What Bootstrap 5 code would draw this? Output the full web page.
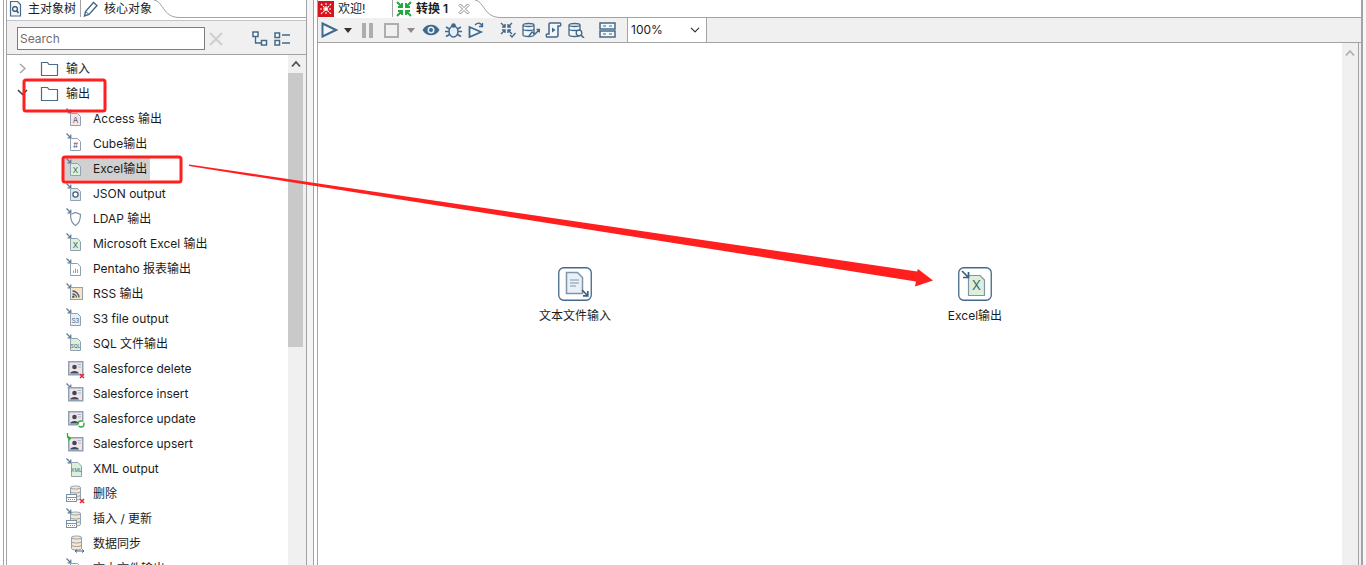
<!DOCTYPE html>
<html lang="zh-CN">
<head>
    <meta charset="UTF-8">
    <meta name="viewport" content="width=device-width, initial-scale=1.0">
    <title>转换 1</title>
    <link href="https://cdn.jsdelivr.net/npm/bootstrap@5.3.0/dist/css/bootstrap.min.css" rel="stylesheet">
    <script src="https://cdn.jsdelivr.net/npm/bootstrap@5.3.0/dist/js/bootstrap.bundle.min.js"></script>
    <style>
        html, body {
            height: 100%;
            overflow: hidden;
        }
        body {
            font-family: "Inter", "Noto Sans CJK SC", sans-serif;
            font-size: 12px;
            line-height: 16px;
            color: #1c1c1c;
            background: #fff;
        }
        svg {
            display: block;
            flex-shrink: 0;
        }
        .app {
            position: relative;
            width: 1366px;
            height: 565px;
            overflow: hidden;
        }
        /* eclipse style double frame round each view */
        .pane-left {
            width: 304px;
            margin-left: 3px;
            padding-left: 2px;
            border-left: 1px solid #a3a3a3;
            border-right: 1px solid #a3a3a3;
        }
        .pane-left-in {
            border-left: 1px solid #a3a3a3;
        }
        .sash {
            width: 6px;
            background: #f4f4f4;
        }
        .pane-right {
            width: 1050px;
            padding-left: 3px;
            border-left: 1px solid #a3a3a3;
            border-right: 2px solid #a3a3a3;
        }
        .pane-right-in {
            border-left: 1px solid #a3a3a3;
        }
        .page-edge {
            background: #f7f7f7;
        }
        .tab-strip {
            height: 18px;
        }
        .view-tab {
            height: 17px;
            gap: 4px;
            white-space: nowrap;
        }
        .tab-filler {
            height: 18px;
            border-bottom: 1px solid #a3a3a3;
        }
        .tab-tree {
            width: 74px;
            padding-left: 1px;
            gap: 5px;
            border-right: 1px solid #a3a3a3;
        }
        .tab-core {
            width: 73px;
            padding-left: 2px;
            gap: 5px;
        }
        .tab-hello {
            width: 75px;
            border-right: 1px solid #a3a3a3;
        }
        .tab-trans {
            width: 82px;
            padding-left: 3px;
        }
        .tab-trans b {
            font-weight: 600;
            width: 38px;
        }
        .search-gap {
            height: 3px;
            border-bottom: 1px solid #c4c4c4;
        }
        .search-row {
            height: 34px;
            padding-left: 10px;
            padding-top: 2px;
            background: #f0f0f0;
            border-bottom: 1px solid #a3a3a3;
        }
        .search-box.form-control {
            width: 188px;
            height: 23px;
            min-height: 0;
            padding: 0 2px;
            font-size: 12px;
            line-height: 16px;
            border: 1px solid #7d7d7d;
            border-radius: 0;
            font-family: inherit;
        }
        .search-box.form-control::placeholder {
            color: #6f6f6f;
            opacity: 1;
        }
        .tree-toggle {
            margin-left: 29px;
        }
        .list-toggle {
            margin-left: 6px;
        }
        .tree-body {
            height: 511px;
            overflow: hidden;
        }
        .tree-list {
            width: 281px;
            padding-top: 1px;
        }
        .tree-row {
            height: 25px;
            white-space: nowrap;
        }
        .tree-row.top-level {
            padding-left: 9px;
        }
        .tree-row.top-level .folder-ico {
            margin-left: 9px;
        }
        .tree-row.top-level .label-text {
            margin-left: 6px;
        }
        .tree-row.step {
            padding-left: 58px;
        }
        .tree-row.step .label-text {
            margin-left: 8px;
        }
        .row-picked {
            width: 87px;
            height: 22px;
            margin-left: -2px;
            padding-left: 2px;
            background: #d0d0d0;
        }
        .v-scroll {
            width: 18px;
            background: #f0f0f0;
        }
        .v-scroll-up {
            width: 15px;
            height: 18px;
        }
        .v-scroll-thumb {
            width: 15px;
            height: 274px;
            background: #c9c9c9;
        }
        .tool-bar {
            height: 25px;
            background: #f0f0f0;
            border-bottom: 1px solid #a3a3a3;
        }
        .tb-btn {
            width: 23px;
            height: 24px;
        }
        .tb-drop {
            width: 14px;
            height: 24px;
        }
        .tb-sep {
            width: 8px;
        }
        .tb-nudge {
            margin-left: 1px;
        }
        .zoom-pick.form-select {
            width: 80px;
            height: 24px;
            padding: 0 0 0 3px;
            font-size: 12px;
            line-height: 16px;
            font-family: inherit;
            color: #1c1c1c;
            border: 0;
            border-left: 1px solid #a3a3a3;
            border-right: 1px solid #a3a3a3;
            border-radius: 0;
            background-position: right 5px center;
            background-size: 12px 10px;
        }
        .canvas-wrap {
            height: 522px;
            padding-right: 2px;
            background: #f0f0f0;
        }
        .canvas-area {
            position: relative;
            overflow: hidden;
            background: #fff;
        }
        .flow-node {
            position: absolute;
            top: 224px;
            width: 100px;
        }
        .node-input {
            left: 207px;
        }
        .node-excel {
            left: 607px;
        }
        .node-name {
            margin-top: 7px;
            text-align: center;
            white-space: nowrap;
        }
        .v-scroll-right {
            width: 17px;
            background: #f0f0f0;
            border-right: 1px solid #a3a3a3;
        }
        .v-scroll-right .up-arrow {
            height: 20px;
        }
        .mark-up {
            position: absolute;
            left: 0;
            top: 0;
            pointer-events: none;
        }
    </style>
</head>
<body>
<svg width="0" height="0" class="position-absolute">
    <defs>
        <symbol id="arr" viewBox="0 0 20 21">
            <path d="M1.5 .5 5.5 4.5M5.8 1.6V4.8H2.6" fill="none" stroke="#5d7b95" stroke-width="1.2"/>
        </symbol>
        <symbol id="doc" viewBox="0 0 20 21">
            <path d="M5.5 5.5H12.5L15.5 8.5V17.5H5.5Z" fill="currentColor" stroke="#8ea2b4"/>
        </symbol>
        <symbol id="folder" viewBox="0 0 20 21">
            <path d="M1.5 4.5H7.5L9 6.5H17.5V17.5H1.5Z" fill="#fff" stroke="#4c6c88" stroke-width="1.2"/>
        </symbol>
        <symbol id="card" viewBox="0 0 20 21">
            <rect x="3.75" y="3.75" width="14" height="13" fill="#f2e4e8" stroke="#8ea2b4" stroke-width="1.5"/>
            <circle cx="9.500" cy="9" r="2.300" fill="#3e4a57"/>
            <path d="M5 15.500C5.500 12 13.500 12 14 15.500Z" fill="#3e4a57"/>
            <path d="M12.500 6.500H16M13 9H16" stroke="#aab6c2"/>
        </symbol>
        <symbol id="db" viewBox="0 0 20 21">
            <path d="M5.500 4.500C5.500 2.500 15.500 2.500 15.500 4.500V15.500C15.500 17.500 5.500 17.500 5.500 15.500Z" fill="#fbe6c8" stroke="#8ea2b4"/>
            <path d="M5.500 4.500C5.500 6.500 15.500 6.500 15.500 4.500M5.500 8.500C5.500 10.500 15.500 10.500 15.500 8.500M5.500 12C5.500 14 15.500 14 15.500 12" fill="none" stroke="#8ea2b4"/>
        </symbol>
        <symbol id="dbtable" viewBox="0 0 20 21">
            <use href="#db"/>
            <rect x="1.500" y="11.500" width="10" height="7" fill="#fff" stroke="#7d91a3"/>
            <path d="M1.500 14.500H11.500" stroke="#7d91a3"/>
            <path d="M3 16.500H10" stroke="#7d91a3" stroke-dasharray="1 1"/>
        </symbol>
        <symbol id="redx" viewBox="0 0 20 21">
            <path d="M15 16 19 20M19 16 15 20" stroke="#e5263b" stroke-width="1.6"/>
        </symbol>
    </defs>
</svg>

<div class="app d-flex">
    <!-- left side: design tree -->
    <div class="pane-left">
        <div class="pane-left-in">
            <div class="tab-strip d-flex">
                <div class="view-tab tab-tree d-flex align-items-center">
                    <svg width="15" height="16" viewBox="0 0 15 16"><path d="M2.500 .5H9.500L12.500 3.500V15H2.500Z" fill="#f3f6f9" stroke="#44688a" stroke-width="1.200"/><circle cx="7" cy="8" r="2.400" fill="none" stroke="#2d4a66" stroke-width="1.200"/><path d="M8.800 10 10.500 12" stroke="#2d4a66" stroke-width="1.300"/></svg>
                    <span>主对象树</span>
                </div>
                <div class="view-tab tab-core d-flex align-items-center">
                    <svg width="16" height="16" viewBox="0 0 16 16"><path d="M1.500 15 2.500 10.500 10.500 1.500 14 4.500 6 13.500Z" fill="#fff" stroke="#44688a" stroke-width="1.400"/><path d="M2.500 10.500 6 13.500" stroke="#44688a"/></svg>
                    <span>核心对象</span>
                </div>
                <svg width="24" height="18" viewBox="0 0 24 18"><path d="M0 0C9 1 9 17 24 17.500" fill="none" stroke="#a3a3a3"/></svg>
                <div class="tab-filler flex-grow-1"></div>
            </div>
            <div class="search-gap"></div>
            <div class="search-row d-flex align-items-center">
                <input class="search-box form-control" type="text" placeholder="Search">
                <svg class="ms-1" width="14" height="14" viewBox="0 0 14 14"><path d="M1 1 13 13M13 1 1 13" stroke="#cfcfcf" stroke-width="2.200"/></svg>
                <svg class="tree-toggle" width="16" height="16" viewBox="0 0 16 16"><path d="M3.500 5V12H9" fill="none" stroke="#44688a" stroke-width="1.300"/><rect x="1" y="1" width="5" height="4.500" fill="#fff" stroke="#44688a" stroke-width="1.500"/><rect x="9.500" y="9.500" width="5" height="4.500" fill="#fff" stroke="#44688a" stroke-width="1.500"/></svg>
                <svg class="list-toggle" width="16" height="16" viewBox="0 0 16 16"><rect x="1" y="2" width="4.500" height="4.500" fill="#fff" stroke="#44688a" stroke-width="1.500"/><rect x="1" y="9.500" width="4.500" height="4.500" fill="#fff" stroke="#44688a" stroke-width="1.500"/><path d="M8 4H16M8 12H16" stroke="#44688a" stroke-width="1.400"/></svg>
            </div>
            <div class="tree-body d-flex">
                <div class="tree-list">
                    <div class="tree-row top-level d-flex align-items-center">
                        <svg width="15" height="15" viewBox="0 0 15 15"><path d="M4 3 9 7.500 4 12" fill="none" stroke="#a8a8a8" stroke-width="1.500"/></svg>
                        <svg class="folder-ico" width="20" height="21"><use href="#folder"/></svg>
                        <span class="label-text">输入</span>
                    </div>
                    <div class="tree-row top-level d-flex align-items-center">
                        <svg width="15" height="15" viewBox="0 0 15 15"><path d="M2 4 6.500 8.500 11 4" fill="none" stroke="#3f3f3f" stroke-width="1.500"/></svg>
                        <svg class="folder-ico" width="20" height="21"><use href="#folder"/></svg>
                        <span class="label-text">输出</span>
                    </div>
                    <div class="tree-row step d-flex align-items-center">
                        <svg width="20" height="21"><use href="#arr"/><use href="#doc" color="#fbe4e6"/><text x="10.500" y="15" font-size="8" text-anchor="middle" fill="#4a6078">A</text></svg>
                        <span class="label-text">Access 输出</span>
                    </div>
                    <div class="tree-row step d-flex align-items-center">
                        <svg width="20" height="21"><use href="#arr"/><use href="#doc" color="#fff"/><text x="10.500" y="15" font-size="8" text-anchor="middle" fill="#4a6078">#</text></svg>
                        <span class="label-text">Cube输出</span>
                    </div>
                    <div class="tree-row step d-flex align-items-center">
                        <div class="row-picked d-flex align-items-center">
                            <svg width="20" height="21"><use href="#arr"/><use href="#doc" color="#dcefd8"/><text x="10.500" y="15" font-size="8" text-anchor="middle" fill="#4a6078">X</text></svg>
                            <span class="label-text">Excel输出</span>
                        </div>
                    </div>
                    <div class="tree-row step d-flex align-items-center">
                        <svg width="20" height="21"><use href="#arr"/><use href="#doc" color="#e3e8ed"/><circle cx="10.500" cy="11.500" r="2.600" fill="#fff" stroke="#4a6078" stroke-width="1.300"/></svg>
                        <span class="label-text">JSON output</span>
                    </div>
                    <div class="tree-row step d-flex align-items-center">
                        <svg width="20" height="21"><use href="#arr"/><path d="M5.500 6.500 10.500 4.500 15.500 6.500C15.500 12 14 15.500 10.500 17.500 7 15.500 5.500 12 5.500 6.500Z" fill="#fff" stroke="#7d91a3" stroke-width="1.200"/></svg>
                        <span class="label-text">LDAP 输出</span>
                    </div>
                    <div class="tree-row step d-flex align-items-center">
                        <svg width="20" height="21"><use href="#arr"/><use href="#doc" color="#dcefd8"/><text x="10.500" y="15" font-size="8" text-anchor="middle" fill="#4a6078">X</text></svg>
                        <span class="label-text">Microsoft Excel 输出</span>
                    </div>
                    <div class="tree-row step d-flex align-items-center">
                        <svg width="20" height="21"><use href="#arr"/><use href="#doc" color="#fff"/><path d="M8.500 15V12.500M10.500 15V10.500M12.500 15V11.500" stroke="#8ea2b4"/></svg>
                        <span class="label-text">Pentaho 报表输出</span>
                    </div>
                    <div class="tree-row step d-flex align-items-center">
                        <svg width="20" height="21"><use href="#arr"/><rect x="5.500" y="4.500" width="12" height="12" fill="#fbe2c2" stroke="#8ea2b4"/><path d="M7.500 8C11 8 14 11 14 14.500M7.500 11C9.500 11 11.500 12.500 11.500 14.500" fill="none" stroke="#3f5a75" stroke-width="1.300"/><circle cx="8.300" cy="13.800" r="1.200" fill="#3f5a75"/></svg>
                        <span class="label-text">RSS 输出</span>
                    </div>
                    <div class="tree-row step d-flex align-items-center">
                        <svg width="20" height="21"><use href="#arr"/><use href="#doc" color="#e6f0f8"/><text x="10.500" y="14.500" font-size="6" text-anchor="middle" fill="#4a6078">S3</text></svg>
                        <span class="label-text">S3 file output</span>
                    </div>
                    <div class="tree-row step d-flex align-items-center">
                        <svg width="20" height="21"><use href="#arr"/><use href="#doc" color="#dcefd8"/><text x="10.500" y="14.500" font-size="5" text-anchor="middle" fill="#4a6078">SQL</text></svg>
                        <span class="label-text">SQL 文件输出</span>
                    </div>
                    <div class="tree-row step d-flex align-items-center">
                        <svg width="20" height="21"><use href="#card"/><use href="#redx"/></svg>
                        <span class="label-text">Salesforce delete</span>
                    </div>
                    <div class="tree-row step d-flex align-items-center">
                        <svg width="20" height="21"><use href="#arr"/><use href="#card" y="1"/></svg>
                        <span class="label-text">Salesforce insert</span>
                    </div>
                    <div class="tree-row step d-flex align-items-center">
                        <svg width="20" height="21"><use href="#card"/><circle cx="16" cy="16" r="3" fill="#fff" stroke="#2fae3c" stroke-width="1.400" stroke-dasharray="7 1.500"/></svg>
                        <span class="label-text">Salesforce update</span>
                    </div>
                    <div class="tree-row step d-flex align-items-center">
                        <svg width="20" height="21"><use href="#card" y="1"/><path d="M2.500 0V3C2.500 5 3.500 5.500 5 5.500M3.300 3.500 5.300 5.500 3.300 7.500" fill="none" stroke="#2fae3c" stroke-width="1.300"/></svg>
                        <span class="label-text">Salesforce upsert</span>
                    </div>
                    <div class="tree-row step d-flex align-items-center">
                        <svg width="20" height="21"><use href="#arr"/><path d="M6.500 4.500H13L16.500 8V18.500H6.500Z" fill="#dcefd8" stroke="#8ea2b4"/><text x="11.500" y="14" font-size="5" text-anchor="middle" fill="#4a6078">XML</text></svg>
                        <span class="label-text">XML output</span>
                    </div>
                    <div class="tree-row step d-flex align-items-center">
                        <svg width="20" height="21"><use href="#dbtable"/><use href="#redx"/></svg>
                        <span class="label-text">删除</span>
                    </div>
                    <div class="tree-row step d-flex align-items-center">
                        <svg width="20" height="21"><use href="#dbtable" y="1"/><use href="#arr"/></svg>
                        <span class="label-text">插入 / 更新</span>
                    </div>
                    <div class="tree-row step d-flex align-items-center">
                        <svg width="20" height="21"><use href="#db" x="1"/><path d="M10 18H19M10 18 12 16.500M10 18 12 19.500M19 18 17 16.500M19 18 17 19.500" fill="none" stroke="#44688a"/></svg>
                        <span class="label-text">数据同步</span>
                    </div>
                    <div class="tree-row step d-flex align-items-center">
                        <svg width="20" height="21"><use href="#arr"/><use href="#doc" color="#fff"/></svg>
                        <span class="label-text">文本文件输出</span>
                    </div>
                </div>
                <div class="v-scroll">
                    <div class="v-scroll-up d-flex justify-content-center align-items-center">
                        <svg width="10" height="8" viewBox="0 0 10 8"><path d="M1 6.500 5 2 9 6.500" fill="none" stroke="#505050" stroke-width="1.800"/></svg>
                    </div>
                    <div class="v-scroll-thumb"></div>
                </div>
            </div>
        </div>
    </div>

    <div class="sash"></div>

    <!-- right side: transformation editor -->
    <div class="pane-right">
        <div class="pane-right-in">
            <div class="tab-strip d-flex">
                <div class="view-tab tab-hello d-flex align-items-center">
                    <svg width="16" height="16" viewBox="0 0 16 16"><rect width="16" height="16" fill="#d8131b"/><path d="M3 3 13 13M13 3 3 13M8 2V14M2 8H14" stroke="#fff" stroke-width="1.100" stroke-dasharray="2 1"/><circle cx="8" cy="8" r="1.800" fill="#fff"/></svg>
                    <span>欢迎!</span>
                </div>
                <div class="view-tab tab-trans d-flex align-items-center">
                    <svg width="16" height="16" viewBox="0 0 16 16"><path d="M1 1 6 6M6 2V6H2M15 1 10 6M10 2V6H14M1 15 6 10M6 14V10H2M15 15 10 10M10 14V10H14" fill="none" stroke="#21a83b" stroke-width="1.900"/></svg>
                    <b>转换 1</b>
                    <svg width="12" height="12" viewBox="0 0 12 12"><path d="M2.500 1 6 4.500 9.500 1 11 2.500 7.500 6 11 9.500 9.500 11 6 7.500 2.500 11 1 9.500 4.500 6 1 2.500Z" fill="#fff" stroke="#8a8a8a"/></svg>
                </div>
                <svg width="24" height="18" viewBox="0 0 24 18"><path d="M0 0C9 1 9 17 24 17.500" fill="none" stroke="#a3a3a3"/></svg>
                <div class="tab-filler flex-grow-1"></div>
            </div>
            <div class="tool-bar d-flex align-items-center">
                <span class="tb-btn d-flex align-items-center justify-content-center"><svg width="17" height="16" viewBox="0 0 17 16"><path d="M1.500 1.500 15 8 1.500 14.500Z" fill="#f4f7fa" stroke="#3f6a8f" stroke-width="2"/></svg></span>
                <span class="tb-drop d-flex align-items-center justify-content-center"><svg width="8" height="5" viewBox="0 0 8 5"><path d="M0 0H8L4 5Z" fill="#333"/></svg></span>
                <span class="tb-btn tb-nudge d-flex align-items-center justify-content-center"><svg width="11" height="15" viewBox="0 0 11 15"><path d="M0 0H4V15H0ZM7 0H11V15H7Z" fill="#adadad"/></svg></span>
                <span class="tb-btn tb-nudge d-flex align-items-center justify-content-center"><svg width="15" height="15" viewBox="0 0 15 15"><rect x="1" y="1" width="13" height="13" fill="none" stroke="#adadad" stroke-width="2"/></svg></span>
                <span class="tb-drop tb-nudge d-flex align-items-center justify-content-center"><svg width="8" height="5" viewBox="0 0 8 5"><path d="M0 0H8L4 5Z" fill="#8c8c8c"/></svg></span>
                <span class="tb-btn tb-nudge d-flex align-items-center justify-content-center"><svg width="18" height="12" viewBox="0 0 18 12"><path d="M.5 6C4 -1 14 -1 17.500 6 14 13 4 13 .5 6Z" fill="#3f6a8f"/><circle cx="9" cy="6" r="3.500" fill="#e9eef3"/><circle cx="9" cy="6" r="2" fill="#3f6a8f"/></svg></span>
                <span class="tb-btn d-flex align-items-center justify-content-center"><svg width="17" height="16" viewBox="0 0 17 16"><ellipse cx="8.500" cy="9.500" rx="4.500" ry="5.500" fill="#e9eef3" stroke="#3f6a8f" stroke-width="1.500"/><circle cx="8.500" cy="3.500" r="2.300" fill="#3f6a8f"/><path d="M1 5 4.500 7M16 5 12.500 7M0 9.500H4M17 9.500H13M1 14.500 4.500 12.500M16 14.500 12.500 12.500" stroke="#3f6a8f" stroke-width="1.500"/></svg></span>
                <span class="tb-btn d-flex align-items-center justify-content-center"><svg width="17" height="16" viewBox="0 0 17 16"><path d="M1.500 5 13 10 1.500 15Z" fill="#f4f7fa" stroke="#3f6a8f" stroke-width="1.800"/><path d="M7 3C10 0 13 1 14 4M14.500 1V4.500H11" fill="none" stroke="#3f6a8f" stroke-width="1.300"/></svg></span>
                <span class="tb-sep"></span>
                <span class="tb-btn d-flex align-items-center justify-content-center"><svg width="16" height="16" viewBox="0 0 16 16"><path d="M1 1 5 5M5 2V5H2M12 1 8 5M8 2V5H11M1 12 5 8M5 11V8H2M12 12 8 8M8 11V8H11" fill="none" stroke="#44688a" stroke-width="1.400"/><path d="M10 13 12 15 15.500 11" fill="none" stroke="#44688a" stroke-width="1.300"/></svg></span>
                <span class="tb-btn d-flex align-items-center justify-content-center"><svg width="18" height="16" viewBox="0 0 18 16"><path d="M1 3C1 1 12 1 12 3V13C12 15 1 15 1 13ZM1 3C1 5 12 5 12 3M1 7C1 9 12 9 12 7" fill="#f4f7fa" stroke="#44688a" stroke-width="1.300"/><path d="M7 14 10 10 13 12 17 8M14.500 7.500H17.500V10.500" fill="none" stroke="#44688a" stroke-width="1.400"/></svg></span>
                <span class="tb-btn d-flex align-items-center justify-content-center"><svg width="17" height="16" viewBox="0 0 17 16"><path d="M5 1H15C16 1 16 4 15 4H13V13C13 15 11 15 11 15H2C1 15 1 12 2 12H4V2C4 1.500 4.500 1 5 1Z" fill="#f4f7fa" stroke="#44688a" stroke-width="1.500"/><path d="M7 5.500 10.500 8 7 10.500Z" fill="#44688a"/></svg></span>
                <span class="tb-btn d-flex align-items-center justify-content-center"><svg width="17" height="16" viewBox="0 0 17 16"><path d="M1 3C1 1 12 1 12 3V13C12 15 1 15 1 13ZM1 3C1 5 12 5 12 3M1 7C1 9 12 9 12 7" fill="#f4f7fa" stroke="#44688a" stroke-width="1.300"/><circle cx="11" cy="11" r="2.800" fill="#f4f7fa" stroke="#44688a" stroke-width="1.300"/><path d="M13 13 16 16" stroke="#44688a" stroke-width="1.600"/></svg></span>
                <span class="tb-sep"></span>
                <span class="tb-btn d-flex align-items-center justify-content-center"><svg width="17" height="16" viewBox="0 0 17 16"><rect x="1" y="1" width="15" height="6" fill="#f4f7fa" stroke="#44688a" stroke-width="1.500"/><rect x="1" y="9" width="15" height="6" fill="#f4f7fa" stroke="#44688a" stroke-width="1.500"/><path d="M4 4H7M10 4H13M4 12H7M10 12H13" stroke="#44688a"/></svg></span>
                <span class="tb-sep"></span>
                <select class="zoom-pick form-select"><option>100%</option></select>
            </div>
            <div class="canvas-wrap d-flex">
                <div class="canvas-area flex-grow-1">
                    <div class="flow-node node-input d-flex flex-column align-items-center">
                        <svg width="34" height="34" viewBox="0 0 34 34">
                            <rect x=".75" y=".75" width="32.500" height="32.500" rx="5" fill="#fff" stroke="#44688a" stroke-width="1.300"/>
                            <path d="M8.500 5.500H19.500L24.500 10.500V26.500H8.500Z" fill="#e9f0f7" stroke="#7f95aa" stroke-width="1.500"/>
                            <path d="M12 13H21M12 16H21M12 19H18" stroke="#7f95aa" stroke-width="1.200"/>
                            <path d="M24 23 29.500 28.500M29.800 24V28.800H25" fill="none" stroke="#3d5f7e" stroke-width="1.700"/>
                        </svg>
                        <div class="node-name">文本文件输入</div>
                    </div>
                    <div class="flow-node node-excel d-flex flex-column align-items-center">
                        <svg width="34" height="34" viewBox="0 0 34 34">
                            <rect x=".75" y=".75" width="32.500" height="32.500" rx="5" fill="#fff" stroke="#44688a" stroke-width="1.300"/>
                            <path d="M10.500 8.500H22L26.500 13V28.500H10.500Z" fill="#dcefd8" stroke="#7f95aa" stroke-width="1.200"/>
                            <text x="18.500" y="23" font-size="13" text-anchor="middle" fill="#4a6078">X</text>
                            <path d="M4 4 10 10M10.500 5V10.500H5" fill="none" stroke="#3d5f7e" stroke-width="1.700"/>
                        </svg>
                        <div class="node-name">Excel输出</div>
                    </div>
                </div>
                <div class="v-scroll-right">
                    <div class="up-arrow d-flex justify-content-center align-items-center">
                        <svg width="10" height="8" viewBox="0 0 10 8"><path d="M1 6.500 5 2 9 6.500" fill="none" stroke="#b0b0b0" stroke-width="1.800"/></svg>
                    </div>
                </div>
            </div>
        </div>
    </div>
    <div class="page-edge flex-grow-1"></div>

    <!-- red hand drawn notes on top of the screenshot -->
    <svg class="mark-up" width="1366" height="565" viewBox="0 0 1366 565">
        <rect x="24" y="80" width="81" height="31" rx="2" fill="none" stroke="#ff1f1f" stroke-width="3"/>
        <rect x="63" y="157" width="118" height="25" rx="2" fill="none" stroke="#ff1f1f" stroke-width="3"/>
        <path d="M189 164.500 917 271.500 918 269 933 280.500 915 286.500 916 281.500 189 166Z" fill="#ff1f1f"/>
    </svg>
</div>
</body>
</html>
